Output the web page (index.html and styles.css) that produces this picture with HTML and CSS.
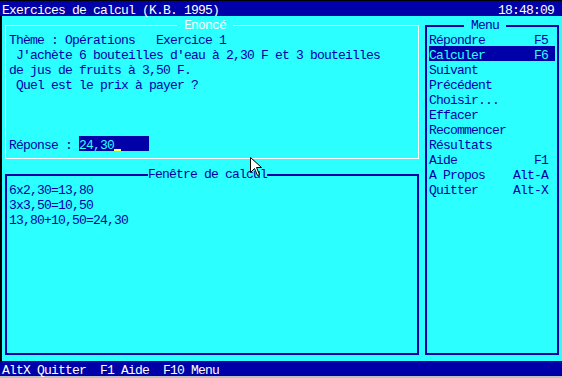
FILE: index.html
```html
<!DOCTYPE html>
<html lang="fr">
<head>
    <meta charset="UTF-8">
    <meta name="viewport" content="width=device-width, initial-scale=1.0">
    <title>Exercices de calcul</title>
    <link rel="stylesheet" href="styles.css">
</head>
<body>
    <div class="screen">
        <header class="titlebar row">
            <span>Exercices de calcul (K.B. 1995)</span>
            <span>18:48:09</span>
        </header>

        <main class="desk">
            <div class="left">
                <!-- Enonce -->
                <section class="box enonce">
                    <h2 class="box-title row">&nbsp;Enoncé&nbsp;</h2>
                    <div class="row">Thème : Opérations   Exercice 1</div>
                    <div class="row"> J'achète 6 bouteilles d'eau à 2,30 F et 3 bouteilles</div>
                    <div class="row">de jus de fruits à 3,50 F.</div>
                    <div class="row"> Quel est le prix à payer ?</div>
                    <div class="row answer">Réponse : <span class="field">24,30<span class="caret"></span></span></div>
                </section>

                <!-- Fenetre de calcul -->
                <section class="box calc">
                    <h2 class="box-title row">Fenêtre de calcul</h2>
                    <div class="row">6x2,30=13,80</div>
                    <div class="row">3x3,50=10,50</div>
                    <div class="row">13,80+10,50=24,30</div>
                </section>
            </div>

            <nav class="box menu">
                <h2 class="box-title row">&nbsp;Menu&nbsp;</h2>
                <div class="row item"><span>Répondre</span><span>F5</span></div>
                <div class="row item active"><span>Calculer</span><span>F6</span></div>
                <div class="row item"><span>Suivant</span></div>
                <div class="row item"><span>Précédent</span></div>
                <div class="row item"><span>Choisir...</span></div>
                <div class="row item"><span>Effacer</span></div>
                <div class="row item"><span>Recommencer</span></div>
                <div class="row item"><span>Résultats</span></div>
                <div class="row item"><span>Aide</span><span>F1</span></div>
                <div class="row item"><span>A Propos</span><span>Alt-A</span></div>
                <div class="row item"><span>Quitter</span><span>Alt-X</span></div>
            </nav>
        </main>

        <footer class="statusbar row">AltX Quitter  F1 Aide  F10 Menu</footer>

        <!-- mouse pointer -->
        <svg class="pointer" width="13" height="20" viewBox="0 0 13 20">
            <path d="M0.5 0.5 L0.5 15.5 L4.5 11.5 L7.5 18.5 L9.5 17.5 L6.5 10.5 L11.5 10.5 Z" fill="#fff" stroke="#000" stroke-width="1"/>
        </svg>
    </div>
</body>
</html>
```

FILE: styles.css
```css
body {
    margin: 0;
    background: #2bffff;
    font-family: "Liberation Mono", "Courier New", monospace;
    font-size: 13px;
    letter-spacing: -0.8px;
    color: #0000a8;
}
.screen {
    position: relative;
    width: 562px;
    height: 378px;
    overflow: hidden;
}
/* one text line of the screen */
.row {
    height: 15px;
    line-height: 19px;
    white-space: pre;
}
.titlebar {
    display: flex;
    justify-content: space-between;
    background: #0000a8;
    color: #fff;
    border-top: 1px solid #000;
    padding: 0 8px 0 2px;
}
.desk {
    box-sizing: border-box;
    height: 345px;
    display: flex;
    gap: 6px;
    border-left: 2px solid #000;
    padding: 9px 0 0 3px;
}
.left {
    width: 414px;
    display: flex;
    flex-direction: column;
}
.box {
    position: relative;
    box-sizing: border-box;
    border: 2px solid #0000a8;
}
.box-title {
    position: absolute;
    margin: 0;
    font-size: inherit;
    font-weight: normal;
    background: #2bffff;
}
.enonce {
    height: 134px;
    border: 1px solid #fff;
    padding: 5px 0 0 3px;
}
.enonce .box-title {
    left: 171px;
    top: -10px;
    color: #fff;
}
.answer {
    margin-top: 45px;
}
.field {
    display: inline-block;
    width: 70px;
    height: 15px;
    vertical-align: top;
    background: #0000a8;
    color: #2bffff;
}
.caret {
    display: inline-block;
    width: 7px;
    height: 15px;
    vertical-align: top;
    box-shadow: inset 0 -2px 0 #ffff55;
}
.calc {
    margin-top: 15px;
    height: 181px;
    padding: 5px 0 0 2px;
}
.calc .box-title {
    left: 141px;
    top: -11px;
}
.menu {
    width: 134px;
    height: 330px;
    padding: 4px 2px 0;
}
.menu .box-title {
    left: 37px;
    top: -11px;
}
.item {
    display: flex;
    justify-content: space-between;
    padding-right: 7px;
}
.item.active {
    background: #0000a8;
    color: #2bffff;
}
.statusbar {
    background: #0000a8;
    color: #fff;
    padding-left: 2px;
    border-bottom: 2px solid #c0c0c0;
}
.pointer {
    position: absolute;
    left: 250px;
    top: 157px;
}
```
